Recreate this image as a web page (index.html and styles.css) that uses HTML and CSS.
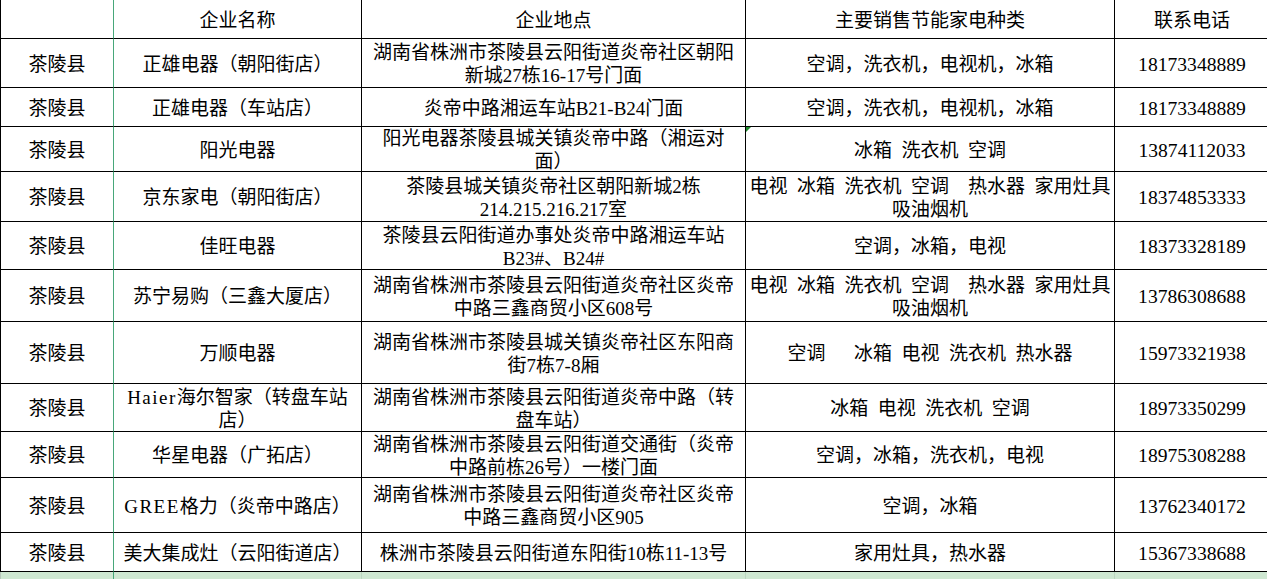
FILE: index.html
```html
<!DOCTYPE html>
<html lang="zh-CN">
<head>
<meta charset="utf-8">
<title>茶陵县节能家电销售企业</title>
<link rel="stylesheet" href="styles.css">
</head>
<body>
<div class="sheet">
<div class="c a"></div><div class="c">企业名称</div><div class="c">企业地点</div><div class="c">主要销售节能家电种类</div><div class="c">联系电话</div>
<div class="c a">茶陵县</div><div class="c">正雄电器（朝阳街店）</div><div class="c">湖南省株洲市茶陵县云阳街道炎帝社区朝阳<br>新城27栋16-17号门面</div><div class="c">空调，洗衣机，电视机，冰箱</div><div class="c tel">18173348889</div>
<div class="c a">茶陵县</div><div class="c">正雄电器（车站店）</div><div class="c">炎帝中路湘运车站B21-B24门面</div><div class="c">空调，洗衣机，电视机，冰箱</div><div class="c tel">18173348889</div>
<div class="c a">茶陵县</div><div class="c">阳光电器</div><div class="c">阳光电器茶陵县城关镇炎帝中路（湘运对<br>面）</div><div class="c flag">冰箱 洗衣机 空调</div><div class="c tel">13874112033</div>
<div class="c a">茶陵县</div><div class="c">京东家电（朝阳街店）</div><div class="c">茶陵县城关镇炎帝社区朝阳新城2栋<br>214.215.216.217室</div><div class="c">电视 冰箱 洗衣机 空调  热水器 家用灶具<br>吸油烟机</div><div class="c tel">18374853333</div>
<div class="c a">茶陵县</div><div class="c">佳旺电器</div><div class="c">茶陵县云阳街道办事处炎帝中路湘运车站<br>B23#、B24#</div><div class="c">空调，冰箱，电视</div><div class="c tel">18373328189</div>
<div class="c a">茶陵县</div><div class="c">苏宁易购（三鑫大厦店）</div><div class="c">湖南省株洲市茶陵县云阳街道炎帝社区炎帝<br>中路三鑫商贸小区608号</div><div class="c">电视 冰箱 洗衣机 空调  热水器 家用灶具<br>吸油烟机</div><div class="c tel">13786308688</div>
<div class="c a">茶陵县</div><div class="c">万顺电器</div><div class="c">湖南省株洲市茶陵县城关镇炎帝社区东阳商<br>街7栋7-8厢</div><div class="c">空调   冰箱 电视 洗衣机 热水器</div><div class="c tel">15973321938</div>
<div class="c a">茶陵县</div><div class="c"><span><span class="lat">Haier</span>海尔智家（转盘车站<br>店）</span></div><div class="c">湖南省株洲市茶陵县云阳街道炎帝中路（转<br>盘车站）</div><div class="c">冰箱 电视 洗衣机 空调</div><div class="c tel">18973350299</div>
<div class="c a">茶陵县</div><div class="c">华星电器（广拓店）</div><div class="c">湖南省株洲市茶陵县云阳街道交通街（炎帝<br>中路前栋26号）一楼门面</div><div class="c">空调，冰箱，洗衣机，电视</div><div class="c tel">18975308288</div>
<div class="c a">茶陵县</div><div class="c"><span><span class="lat">GREE</span>格力（炎帝中路店）</span></div><div class="c">湖南省株洲市茶陵县云阳街道炎帝社区炎帝<br>中路三鑫商贸小区905</div><div class="c">空调，冰箱</div><div class="c tel">13762340172</div>
<div class="c a">茶陵县</div><div class="c">美大集成灶（云阳街道店）</div><div class="c">株洲市茶陵县云阳街道东阳街10栋11-13号</div><div class="c">家用灶具，热水器</div><div class="c tel">15367338688</div>
<div class="f a"></div><div class="f"></div><div class="f"></div><div class="f"></div><div class="f"></div>
</div>
</body>
</html>
```
FILE: styles.css
```css
html, body {
  margin: 0;
  padding: 0;
  background: #ffffff;
  overflow: hidden;
}

.sheet {
  width: 1267px;
  height: 579px;
  display: grid;
  grid-template-columns: 114px 248px 384px 369px 155px;
  grid-template-rows: 39px 49px 39px 45px 50px 48px 52px 62px 48px 46px 55px 39px 8px;
  font-family: "Liberation Serif", "Noto Sans CJK SC", serif;
  font-size: 19px;
  line-height: 23px;
  color: #000000;
  word-spacing: 0.25em;
}

.c {
  box-sizing: border-box;
  display: flex;
  align-items: center;
  justify-content: center;
  text-align: center;
  white-space: pre;
  overflow: hidden;
  padding-top: 2px;
  border-right: 1px solid #000000;
  border-bottom: 1px solid #000000;
}

.c.a {
  border-left: 1px solid #000000;
  border-right: 1px solid #47a77a;
}

.lat {
  letter-spacing: 1.5px;
}

.tel {
  font-size: 19.6px;
}

.flag {
  position: relative;
}

.flag::before {
  content: "";
  position: absolute;
  left: 0;
  top: 0;
  border-top: 5px solid #1f8a2c;
  border-right: 5px solid transparent;
}

.f {
  box-sizing: border-box;
  background: #cfe8d2;
  border-right: 1px solid #bcd6c0;
}

.f.a {
  border-left: 1px solid #b8c8bb;
  border-right: 1px solid #47a77a;
}
```
